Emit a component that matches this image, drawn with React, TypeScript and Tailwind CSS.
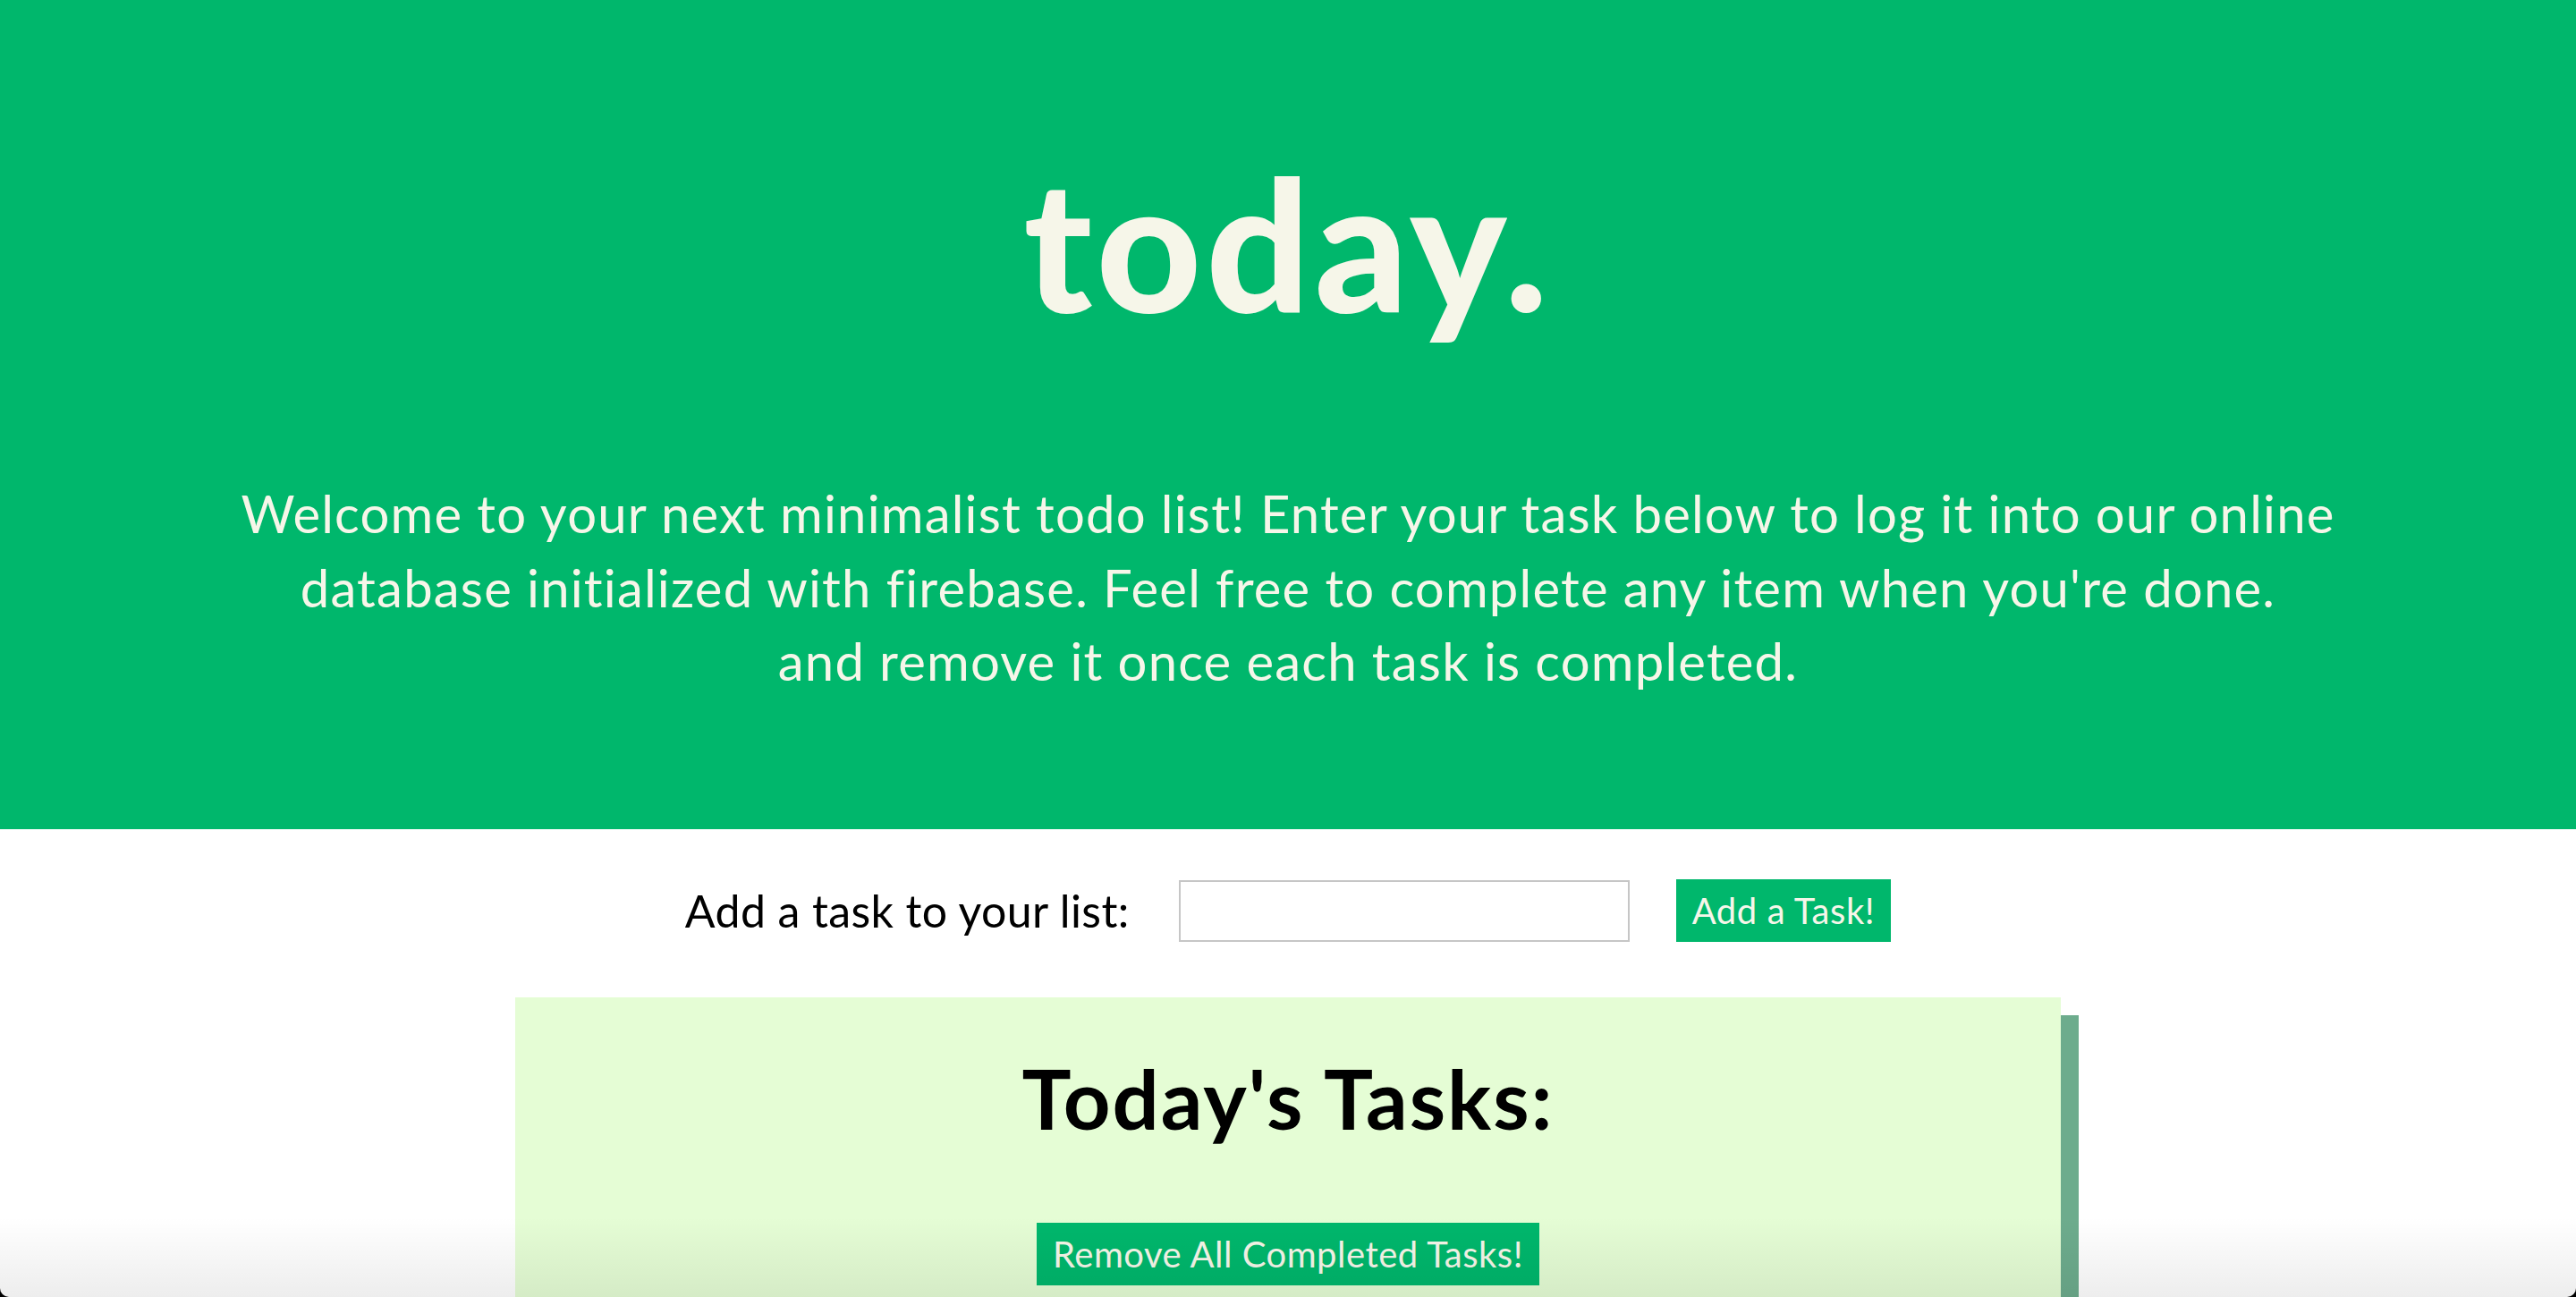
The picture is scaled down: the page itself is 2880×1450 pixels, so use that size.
import React, { useState } from 'react';

const App: React.FC = () => {
  const [task, setTask] = useState('');

  return (
    <div className="h-[1450px] bg-black">
      <div
        className="relative h-full overflow-hidden rounded-b-[10px] bg-white"
        style={{ fontFamily: 'Lato, "Open Sans", "Liberation Sans", sans-serif' }}
      >
        {/* Header */}
        <header className="bg-[#00b76c] pb-[146px] text-center text-[#f6f6e9]">
          <h1 className="pt-[168px] text-[204px] font-black leading-none tracking-[5px]">today.</h1>
          <p className="mt-[161px] text-[58px] font-normal leading-[82.5px] tracking-[1.2px]">
            Welcome to your next minimalist todo list! Enter your task below to log it into our online
            <br />
            database initialized with firebase. Feel free to complete any item when you're done.
            <br />
            and remove it once each task is completed.
          </p>
        </header>

        {/* Add task form */}
        <form
          className="mt-[54px] flex items-center justify-center"
          onSubmit={(e) => e.preventDefault()}
        >
          <label htmlFor="task" className="text-[50px] font-normal tracking-[0.4px] text-black">
            Add a task to your list:
          </label>
          <input
            id="task"
            type="text"
            value={task}
            onChange={(e) => setTask(e.target.value)}
            className="ml-[55px] h-[69px] w-[504px] border-2 border-[#c6c6c6] bg-white px-3 text-[36px] outline-none"
          />
          <button
            type="submit"
            className="ml-[52px] h-[70px] bg-[#00b76c] px-[18px] text-[40px] leading-none tracking-[0.6px] text-[#f6f6e9]"
          >
            Add a Task!
          </button>
        </form>

        {/* Task list */}
        <section className="mx-auto mt-[59px] w-[1728px] bg-[#e5fdd5] pt-[58px] pb-[80px] text-center shadow-[20px_20px_0_#6dac8d]">
          <h2 className="text-[92px] font-bold leading-[1.2] tracking-[2px] text-black">Today's Tasks:</h2>
          <button className="mt-[84px] h-[70px] bg-[#00b76c] px-[18px] text-[40px] leading-none tracking-[0.5px] text-[#f6f6e9]">
            Remove All Completed Tasks!
          </button>
          <ul className="mt-10"></ul>
        </section>

        {/* window edge shade */}
        <div className="pointer-events-none absolute inset-x-0 bottom-0 h-[90px] bg-gradient-to-b from-transparent to-black/[0.07]" />
      </div>
    </div>
  );
};

export default App;
